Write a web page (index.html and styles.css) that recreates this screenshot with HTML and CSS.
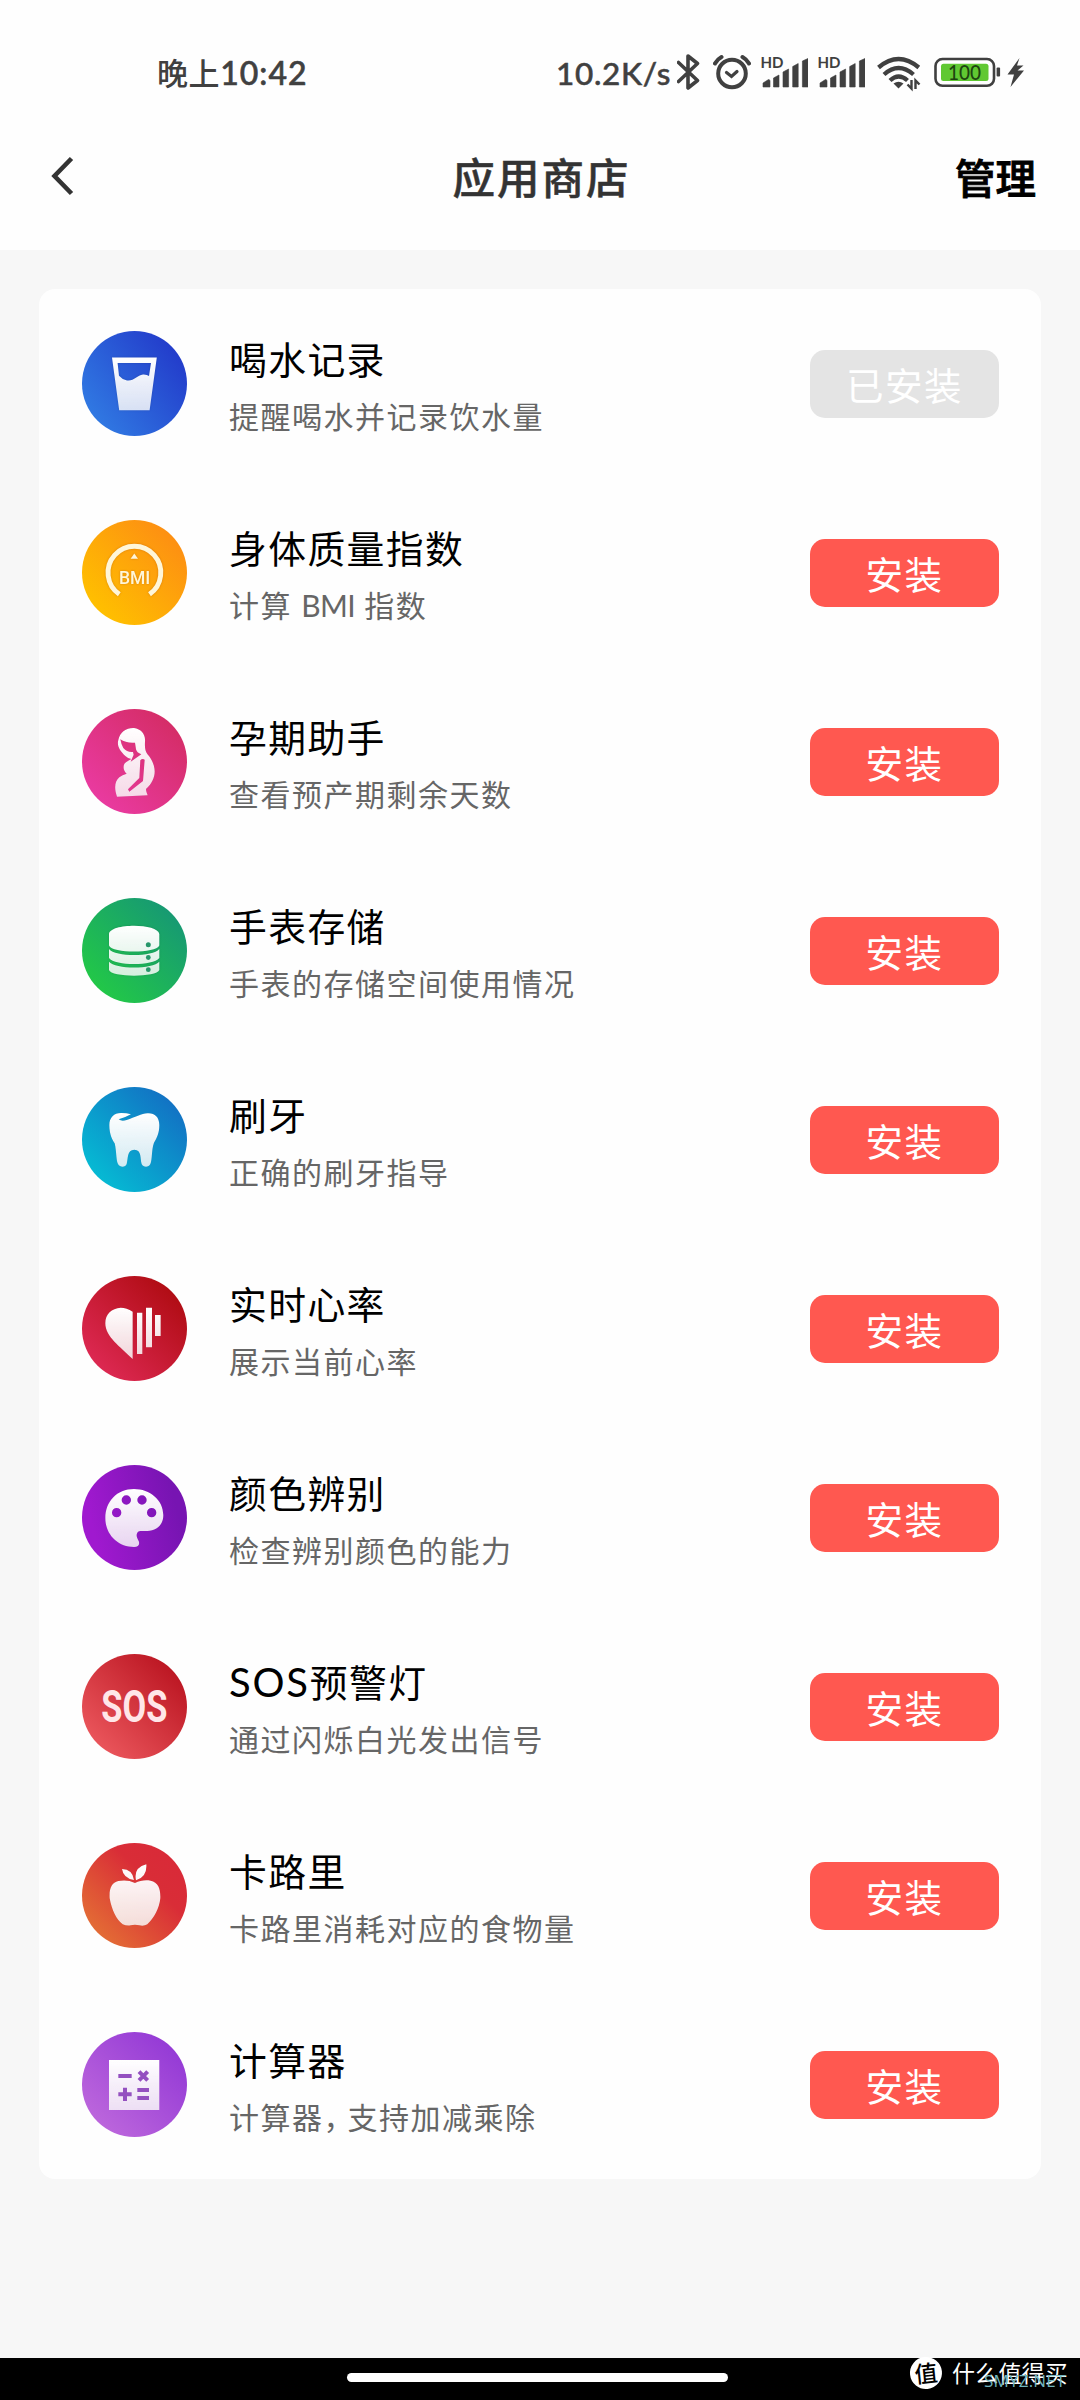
FILE: index.html
```html
<!DOCTYPE html>
<html lang="zh-CN">
<head>
<meta charset="utf-8">
<title>应用商店</title>
<link rel="stylesheet" href="styles.css">
</head>
<body>
<svg class="defs" width="0" height="0" aria-hidden="true">
  <defs>
    <linearGradient id="g-water" x1="0.1" y1="0.8" x2="0.9" y2="0.2"><stop offset="0" stop-color="#3078e2"/><stop offset="1" stop-color="#233dcb"/></linearGradient>
    <linearGradient id="g-bmi" x1="0.15" y1="0.85" x2="0.85" y2="0.15"><stop offset="0" stop-color="#ffbf00"/><stop offset="1" stop-color="#fd9012"/></linearGradient>
    <linearGradient id="g-preg" x1="0.15" y1="0.85" x2="0.85" y2="0.15"><stop offset="0" stop-color="#e93a9f"/><stop offset="1" stop-color="#d52d68"/></linearGradient>
    <linearGradient id="g-store" x1="0.15" y1="0.85" x2="0.85" y2="0.15"><stop offset="0" stop-color="#22c748"/><stop offset="1" stop-color="#179a72"/></linearGradient>
    <linearGradient id="g-tooth" x1="0.15" y1="0.85" x2="0.85" y2="0.15"><stop offset="0" stop-color="#06b9d3"/><stop offset="1" stop-color="#1273c4"/></linearGradient>
    <linearGradient id="g-heart" x1="0.15" y1="0.85" x2="0.85" y2="0.15"><stop offset="0" stop-color="#dc2851"/><stop offset="1" stop-color="#b10d15"/></linearGradient>
    <linearGradient id="g-color" x1="0.1" y1="0.6" x2="0.9" y2="0.4"><stop offset="0" stop-color="#a019cf"/><stop offset="1" stop-color="#7714b2"/></linearGradient>
    <linearGradient id="g-sos" x1="0.15" y1="0.85" x2="0.85" y2="0.15"><stop offset="0" stop-color="#e9545a"/><stop offset="1" stop-color="#bd1824"/></linearGradient>
    <linearGradient id="g-apple" x1="0.15" y1="0.85" x2="0.85" y2="0.15"><stop offset="0" stop-color="#e36b35"/><stop offset="0.7" stop-color="#d92d37"/><stop offset="1" stop-color="#d92a38"/></linearGradient>
    <linearGradient id="g-calc" x1="0.15" y1="0.85" x2="0.85" y2="0.15"><stop offset="0" stop-color="#bb65dc"/><stop offset="1" stop-color="#953bd6"/></linearGradient>
    <linearGradient id="f-white" x1="0" y1="0" x2="0" y2="1"><stop offset="0" stop-color="#fff"/><stop offset="1" stop-color="#fff" stop-opacity="0.82"/></linearGradient>
  </defs>
</svg>

<header class="top">
  <div class="status">
    <span class="clock">晚上<span class="digits">10:42</span></span>
    <div class="status-right">
      <span class="speed">10.2K/s</span>
      <svg class="s-bt" viewBox="676 54 23 38" width="23" height="38"><path d="M677.5 62.5L696.5 80.5L687 88V56L696.5 63.5L677.5 81.5" fill="none" stroke="#404040" stroke-width="3.6" stroke-linejoin="round" stroke-linecap="round"/></svg>
      <svg class="s-alarm" viewBox="712 54 38 38" width="38" height="38"><g fill="none" stroke="#404040" stroke-width="4" stroke-linecap="round"><circle cx="731" cy="73.5" r="13.8"/><path d="M725.5 72.5L730.5 76.5L736 71.5" stroke-width="3.2"/><path d="M714 63.5Q716 59.5 720.5 57M741.500 57Q746 59.500 748 63.5"/></g></svg>
      <svg class="s-sig" viewBox="760 54 47 38" width="47" height="38"><g fill="#404040"><text x="759.5" y="68.300" class="hd">HD</text><path d="M762 87V83L767.500 79.500Q769 79.500 769 81V87ZM772.500 87V78L778 75V87ZM782 87V72L787.600 69V87ZM791.700 87V66.500L797.200 63.500V87ZM801.400 87V61L807 58.500V87Z" stroke="#404040" stroke-width=".6" stroke-linejoin="round"/></g></svg>
      <svg class="s-sig" viewBox="760 54 47 38" width="47" height="38"><g fill="#404040"><text x="759.5" y="68.300" class="hd">HD</text><path d="M762 87V83L767.500 79.500Q769 79.500 769 81V87ZM772.500 87V78L778 75V87ZM782 87V72L787.600 69V87ZM791.700 87V66.500L797.200 63.500V87ZM801.400 87V61L807 58.500V87Z" stroke="#404040" stroke-width=".6" stroke-linejoin="round"/></g></svg>
      <svg class="s-wifi" viewBox="877 54 44 38" width="44" height="38"><g fill="none" stroke="#404040" stroke-width="4.300"><path d="M878.500 67.500Q898.500 50.500 918.800 67.500M884 74.500Q898.500 61.500 913.500 74.500M890 80.500Q898.500 72.500 907.500 80.500"/></g><path d="M893.500 83.500Q898.500 79.800 903.500 83.500L898.500 88.500Z" fill="#404040"/><path d="M911.500 80V88.500L907.500 84.500M915.500 89V80.500L919.500 84.500" fill="none" stroke="#404040" stroke-width="2.400"/></svg>
      <svg class="s-bat" viewBox="934 54 67 38" width="67" height="38"><rect x="935.500" y="59" width="58.500" height="26.800" rx="7" fill="#fff" stroke="#404040" stroke-width="2.600"/><rect x="941" y="63.800" width="47.500" height="17.300" rx="2.500" fill="#60c832"/><rect x="996.600" y="67.500" width="3.500" height="9" rx="1" fill="#404040"/><text x="964.500" y="80" class="pct" text-anchor="middle" textLength="33" lengthAdjust="spacingAndGlyphs">100</text></svg>
      <svg class="s-bolt" viewBox="1007 54 18 38" width="18" height="38"><path d="M1019.500 58L1007.500 74.500H1014L1010.500 87L1024 70.500H1017.500L1023.500 65.500H1017Z" fill="#404040"/></svg>
    </div>
  </div>
  <div class="nav">
    <svg class="back" viewBox="0 0 24 40" width="24" height="40"><path d="M20.500 2.500L3.500 20L20.500 37.500" fill="none" stroke="#333" stroke-width="4.600"/></svg>
    <h1 class="title">应用商店</h1>
    <a class="manage">管理</a>
  </div>
</header>

<main class="page">
  <ul class="card">
    <li class="row">
      <svg class="icon" viewBox="0 0 105 105"><circle cx="52.500" cy="52.500" r="52.500" fill="url(#g-water)"/><path class="sym" fill-rule="evenodd" d="M30 26.500H74.800L67.600 79.300H37.200ZM35.600 32L37 44.800Q40 48.500 45 49.500C52 50.500 55 44 61 43.500Q65 43.300 67 45L69 32Z"/></svg>
      <div class="info"><h2>喝水记录</h2><p>提醒喝水并记录饮水量</p></div>
      <button class="btn done">已安装</button>
    </li>
    <li class="row">
      <svg class="icon" viewBox="0 0 105 105"><circle cx="52.500" cy="52.500" r="52.500" fill="url(#g-bmi)"/><g class="cream"><path d="M37.300 74.300A26.400 26.400 0 1 1 67.500 74.300" fill="none" stroke="#fff6d8" stroke-width="4.900"/><path d="M52.300 33.500L56 38.800H48.600Z"/><text x="52.600" y="63.500" class="bmi" text-anchor="middle">BMI</text></g></svg>
      <div class="info"><h2>身体质量指数</h2><p>计算 <span class="latin">BMI</span> 指数</p></div>
      <button class="btn">安装</button>
    </li>
    <li class="row">
      <svg class="icon" viewBox="0 0 105 105"><circle cx="52.500" cy="52.500" r="52.500" fill="url(#g-preg)"/><g transform="translate(22 11) scale(.3333)"><path class="sym" fill-rule="evenodd" d="M43 60C48 35 68 23 90 24C112 27 125 43 123 65C122 85 124 96 135 108C160 142 158 178 126 207C126 215 129 219 131 226L39 230C30 203 32 185 46 172Q55 164 68 161C55 150 57 132 66 127Q74 121 82 117Q72 116 64 108C48 93 38 78 43 60ZM49 58Q52 75 58 84Q70 98 87 96L89 104L80 125L112 103Q98 98 96 88L93 68Q66 70 49 58ZM109 121L106 174L72 208L76 215L117 183L122 119Q115 114 109 121Z"/></g></svg>
      <div class="info"><h2>孕期助手</h2><p>查看预产期剩余天数</p></div>
      <button class="btn">安装</button>
    </li>
    <li class="row">
      <svg class="icon" viewBox="0 0 105 105"><circle cx="52.500" cy="52.500" r="52.500" fill="url(#g-store)"/><path class="sym" d="M27 36C28 25 76 25 77.300 36V47.500C74 55.500 30 55.500 27 47.500ZM27 51C33 59 71 59 77.300 51V60C71 68 33 68 27 60ZM27 63.800C33 71.500 71 71.500 77.300 63.800V72C75 79.500 29 79.500 27 72Z"/><g fill="#26966a"><circle cx="66.300" cy="46.700" r="2.500"/><circle cx="66.300" cy="59.500" r="2.400"/><circle cx="66.300" cy="71.700" r="2.400"/></g></svg>
      <div class="info"><h2>手表存储</h2><p>手表的存储空间使用情况</p></div>
      <button class="btn">安装</button>
    </li>
    <li class="row">
      <svg class="icon" viewBox="0 0 105 105"><circle cx="52.500" cy="52.500" r="52.500" fill="url(#g-tooth)"/><g transform="translate(-22 -27) scale(.3333)"><path class="sym" d="M185 159C163 158 148 172 148 195C148 225 158 240 164 250C170 275 168 300 174 312C180 323 196 323 200 312C205 295 200 270 223 269C246 270 240 295 245 312C250 323 266 323 271 312C277 300 274 270 282 248C290 235 298 220 298 195C298 170 282 158 262 160C245 161 225 172 200 180Q185 185 176 178Q195 173 213 163Q200 159 185 159Z"/></g></svg>
      <div class="info"><h2>刷牙</h2><p>正确的刷牙指导</p></div>
      <button class="btn">安装</button>
    </li>
    <li class="row">
      <svg class="icon" viewBox="0 0 105 105"><circle cx="52.500" cy="52.500" r="52.500" fill="url(#g-heart)"/><g transform="translate(-22 -216) scale(.3333)"><path class="sym" d="M218 755Q200 743 182 743C155 745 136 762 136 790C136 830 180 860 218 897ZM231 758H247V882H231ZM258 743H276V862H258ZM285 765H302V828H285Z"/></g></svg>
      <div class="info"><h2>实时心率</h2><p>展示当前心率</p></div>
      <button class="btn">安装</button>
    </li>
    <li class="row">
      <svg class="icon" viewBox="0 0 105 105"><circle cx="52.500" cy="52.500" r="52.500" fill="url(#g-color)"/><g transform="translate(-22 -25) scale(.3333)"><path class="sym" fill-rule="evenodd" d="M222 147C170 147 136 185 136 234C136 285 175 321 222 321C236 321 240 312 236 303C230 292 228 285 232 278C236 271 245 273 262 273C290 272 310 255 310 225C310 180 270 147 222 147ZM156 218a14 14 0 1 0 28 0a14 14 0 1 0 -28 0ZM185 180a14 14 0 1 0 28 0a14 14 0 1 0 -28 0ZM232 180a14 14 0 1 0 28 0a14 14 0 1 0 -28 0ZM261 218a14 14 0 1 0 28 0a14 14 0 1 0 -28 0Z"/></g></svg>
      <div class="info"><h2>颜色辨别</h2><p>检查辨别颜色的能力</p></div>
      <button class="btn">安装</button>
    </li>
    <li class="row">
      <svg class="icon" viewBox="0 0 105 105"><circle cx="52.500" cy="52.500" r="52.500" fill="url(#g-sos)"/><text x="19.300" y="68" class="sos" textLength="66" lengthAdjust="spacingAndGlyphs">SOS</text></svg>
      <div class="info"><h2><span class="sos-word">SOS</span>预警灯</h2><p>通过闪烁白光发出信号</p></div>
      <button class="btn">安装</button>
    </li>
    <li class="row">
      <svg class="icon" viewBox="0 0 105 105"><circle cx="52.500" cy="52.500" r="52.500" fill="url(#g-apple)"/><g transform="translate(-22 -23) scale(.3333)"><path class="sym" d="M225 189C208 180 190 180 175 183C155 188 147 205 149 235C155 270 170 300 188 313Q200 318 212 316Q225 313 238 316Q252 319 262 313C282 295 298 265 301 235C302 205 295 188 272 182C255 179 240 182 225 189ZM222 180Q190 175 186 147Q218 148 222 180ZM228 181Q220 143 259 133Q262 172 228 181Z"/></g></svg>
      <div class="info"><h2>卡路里</h2><p>卡路里消耗对应的食物量</p></div>
      <button class="btn">安装</button>
    </li>
    <li class="row">
      <svg class="icon" viewBox="0 0 105 105"><circle cx="52.500" cy="52.500" r="52.500" fill="url(#g-calc)"/><g transform="translate(-22 -212) scale(.3333)"><path class="sym" d="M147 720H298V870H147Z"/><path d="M175 768H215M175 823H215M195 803V843M232 810H267M232 834H267M237 755L263 781M263 755L237 781" stroke="#9450c0" stroke-width="12" fill="none"/></g></svg>
      <div class="info"><h2>计算器</h2><p>计算器<span class="comma">，</span>支持加减乘除</p></div>
      <button class="btn">安装</button>
    </li>
  </ul>
</main>

<footer class="gesture">
  <div class="pill"></div>
  <div class="mark">
    <span class="badge">值</span>
    <span class="brand">什么值得买</span>
    <span class="site">SMYZ.NET</span>
  </div>
</footer>
</body>
</html>
```
FILE: styles.css
```css
* { box-sizing: border-box; }

body {
  margin: 0;
  width: 1080px;
  height: 2400px;
  display: flex;
  flex-direction: column;
  background: #f7f7f7;
  font-family: Lato, "Noto Sans CJK SC", sans-serif;
  overflow: hidden;
}

h1, h2, p, ul { margin: 0; padding: 0; font-weight: 400; }
svg { display: block; flex: none; }
.defs { position: absolute; }

.top {
  flex: none;
  height: 250px;
  background: #fefefe;
}

.status {
  height: 104px;
  padding: 43px 55px 0 157px;
  display: flex;
  justify-content: space-between;
  align-items: flex-start;
  color: #404040;
  font-size: 31px;
  font-weight: 500;
}
.clock, .speed { line-height: 60px; white-space: nowrap; }
.clock { letter-spacing: .6px; }
.digits { font-size: 32px; letter-spacing: 1px; -webkit-text-stroke: .6px #404040; }
.status-right { display: flex; align-items: flex-start; }
.status-right svg { margin-top: 11px; }
.speed {
  width: 121px;
  font-size: 31.500px;
  letter-spacing: .7px;
  -webkit-text-stroke: .5px #404040;
}
.s-alarm { margin-left: 13px; }
.s-sig { margin-left: 10px; }
.s-wifi { margin-left: 12px; }
.s-bat { margin-left: 13px; }
.s-bolt { margin-left: 6px; }
.hd { font: 700 15px Lato, sans-serif; }
.pct { font: 500 21px Lato, sans-serif; fill: #1d4410; }

.nav {
  height: 146px;
  padding: 0 44px 0 51px;
  display: grid;
  grid-template-columns: 1fr auto 1fr;
  align-items: center;
}
.back { margin-top: -2px; }
.title {
  margin: -3px 0 0 -4px;
  color: #333;
  font-size: 42.500px;
  font-weight: 500;
  letter-spacing: 2px;
  -webkit-text-stroke: .5px #333;
}
.manage {
  justify-self: end;
  margin-top: -2px;
  color: #000;
  font-size: 40.500px;
  font-weight: 500;
  -webkit-text-stroke: .9px #000;
}

.page { flex: 1; padding: 39px 39px 0; }
.card {
  list-style: none;
  background: #fefefe;
  border-radius: 16px;
}
.row {
  height: 189px;
  padding: 0 42px 0 43px;
  display: flex;
  align-items: center;
}
.icon { width: 105px; height: 105px; }
.info { flex: 1; padding: 8px 0 0 42px; }
.info h2 {
  font-size: 37.800px;
  line-height: 56px;
  letter-spacing: 1.400px;
  color: #000;
}
.info p {
  font-size: 30px;
  line-height: 56px;
  letter-spacing: 1.500px;
  color: #666;
}
.comma { letter-spacing: -6px; }
.latin { letter-spacing: -.6px; }
.sos-word { font-size: 40px; line-height: 1; letter-spacing: 1.800px; }

.sym { fill: url(#f-white); filter: drop-shadow(0 0 1px rgba(0, 0, 0, .15)); }
.cream { fill: #fff6d8; filter: drop-shadow(0 0 1px rgba(160, 70, 0, .4)); }
.bmi { font: 500 17.500px Roboto, sans-serif; }
.sos { font: 700 44px Roboto, sans-serif; fill: #ffe6e8; }

.btn {
  width: 189px;
  height: 68px;
  border: 0;
  border-radius: 15px;
  padding: 1px 0 0;
  background: #ff5850;
  color: #fff;
  font: 400 37.500px "Noto Sans CJK SC", sans-serif;
  line-height: 60px;
  letter-spacing: 1.500px;
}
.done { background: #e4e4e4; }

.gesture {
  flex: none;
  height: 42px;
  background: #000;
  display: grid;
  grid-template-columns: 347px 381px 182px auto;
}
.pill { grid-column: 2; height: 9px; margin-top: 15px; border-radius: 4.500px; background: #fff; }
.mark {
  grid-column: 4;
  position: relative;
  display: flex;
  gap: 10px;
  height: 32px;
  margin-top: -1px;
  color: #fff;
  font-size: 23px;
  line-height: 32px;
}
.badge {
  width: 32px;
  height: 32px;
  border-radius: 50%;
  background: #fff;
  color: #000;
  text-align: center;
  font-weight: 500;
  transform: rotate(-6deg);
}
.brand { letter-spacing: .2px; }
.site {
  position: absolute;
  left: 74px;
  top: 14px;
  font: 400 17px/20px "Open Sans", sans-serif;
  letter-spacing: .2px;
  color: #6fb4be;
}
```
